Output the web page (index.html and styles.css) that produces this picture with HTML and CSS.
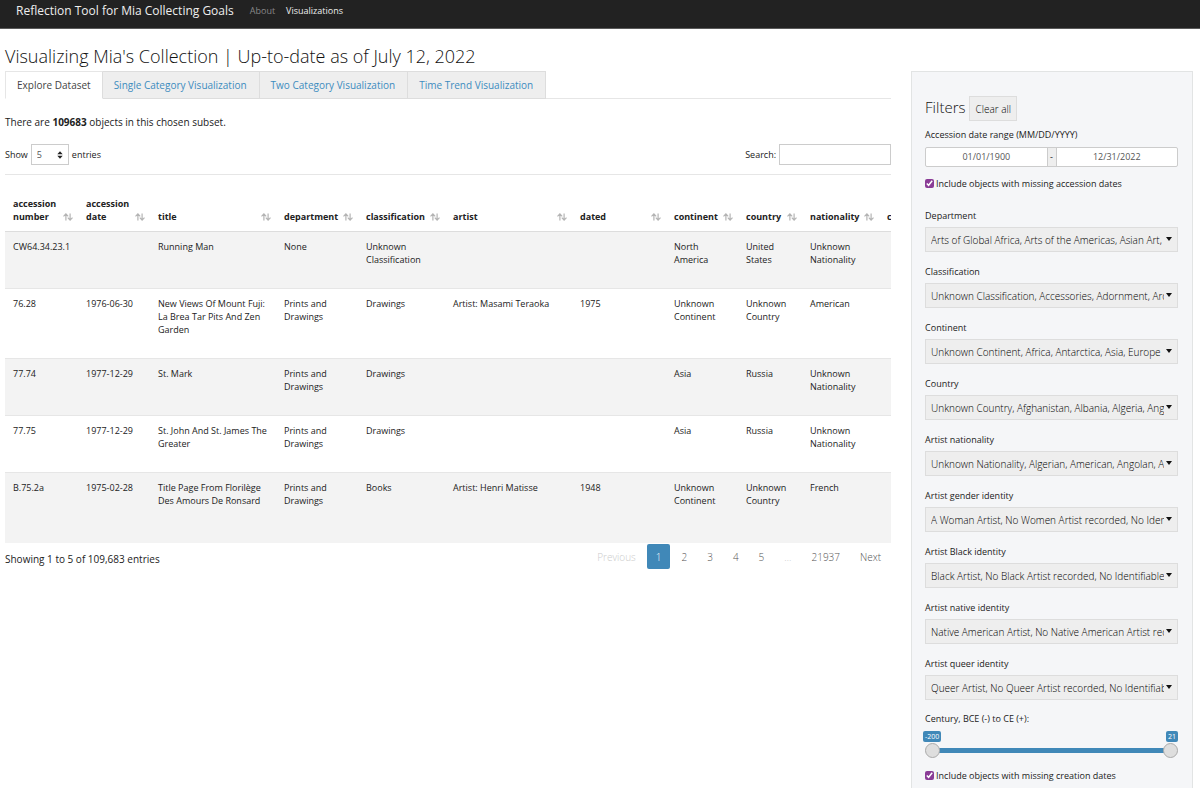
FILE: index.html
```html
<!DOCTYPE html>
<html lang="en">
<head>
<meta charset="utf-8">
<title>Reflection Tool for Mia Collecting Goals</title>
<link rel="stylesheet" href="styles.css">
</head>
<body>
<svg class="sprite" aria-hidden="true">
  <symbol id="sort" viewBox="0 0 10 8">
    <path d="M2.9 7.6V1M.5 3.3L2.9.9l2.3 2.4M7.1.4V7M4.8 4.7l2.3 2.4 2.4-2.4" fill="none" stroke="currentColor" stroke-width="1.2"/>
  </symbol>
</svg>
<nav class="navbar">
  <span class="brand">Reflection Tool for Mia Collecting Goals</span>
  <a class="nav-link" href="#about">About</a>
  <a class="nav-link active" href="#visualizations">Visualizations</a>
</nav>
<h1 class="page-title">Visualizing Mia's Collection | Up-to-date as of July 12, 2022</h1>
<div class="layout">
  <main>
    <div class="tabs">
      <a class="tab active" href="#explore">Explore Dataset</a>
      <a class="tab" href="#single">Single Category Visualization</a>
      <a class="tab" href="#two">Two Category Visualization</a>
      <a class="tab" href="#trend">Time Trend Visualization</a>
    </div>
    <p class="summary">There are <strong>109683</strong> objects in this chosen subset.</p>
    <div class="controls">
      <label class="length">Show
        <span class="length-box">
          <select class="length-select"><option>5</option><option>10</option><option>25</option></select>
          <svg class="updown" viewBox="0 0 6 8" aria-hidden="true"><path d="M.3 3.2L3 .3l2.7 2.9zM.3 4.8L3 7.7l2.7-2.9z"/></svg>
        </span>
        entries</label>
      <label class="search">Search: <input class="search-input" type="search"></label>
    </div>
    <div class="table-wrap">
      <table class="data">
        <colgroup><col class="c-number"><col class="c-date"><col class="c-title"><col class="c-dept"><col class="c-class"><col class="c-artist"><col class="c-dated"><col class="c-cont"><col class="c-country"><col class="c-nat"><col class="c-more"></colgroup>
        <thead>
          <tr>
            <th><button class="sort">accession number<svg class="sort-icon"><use href="#sort"/></svg></button></th>
            <th><button class="sort">accession date<svg class="sort-icon"><use href="#sort"/></svg></button></th>
            <th><button class="sort">title<svg class="sort-icon"><use href="#sort"/></svg></button></th>
            <th><button class="sort">department<svg class="sort-icon"><use href="#sort"/></svg></button></th>
            <th><button class="sort">classification<svg class="sort-icon"><use href="#sort"/></svg></button></th>
            <th><button class="sort">artist<svg class="sort-icon"><use href="#sort"/></svg></button></th>
            <th><button class="sort">dated<svg class="sort-icon"><use href="#sort"/></svg></button></th>
            <th><button class="sort">continent<svg class="sort-icon"><use href="#sort"/></svg></button></th>
            <th><button class="sort">country<svg class="sort-icon"><use href="#sort"/></svg></button></th>
            <th><button class="sort">nationality<svg class="sort-icon"><use href="#sort"/></svg></button></th>
            <th><button class="sort">c</button></th>
          </tr>
        </thead>
        <tbody>
          <tr><td>CW64.34.23.1</td><td></td><td>Running Man</td><td>None</td><td>Unknown Classification</td><td></td><td></td><td>North America</td><td>United States</td><td>Unknown Nationality</td><td></td></tr>
          <tr><td>76.28</td><td>1976-06-30</td><td>New Views Of Mount Fuji: La Brea Tar Pits And Zen Garden</td><td>Prints and Drawings</td><td>Drawings</td><td>Artist: Masami Teraoka</td><td>1975</td><td>Unknown Continent</td><td>Unknown Country</td><td>American</td><td></td></tr>
          <tr><td>77.74</td><td>1977-12-29</td><td>St. Mark</td><td>Prints and Drawings</td><td>Drawings</td><td></td><td></td><td>Asia</td><td>Russia</td><td>Unknown Nationality</td><td></td></tr>
          <tr><td>77.75</td><td>1977-12-29</td><td>St. John And St. James The Greater</td><td>Prints and Drawings</td><td>Drawings</td><td></td><td></td><td>Asia</td><td>Russia</td><td>Unknown Nationality</td><td></td></tr>
          <tr class="tall"><td>B.75.2a</td><td>1975-02-28</td><td>Title Page From Florilège Des Amours De Ronsard</td><td>Prints and Drawings</td><td>Books</td><td>Artist: Henri Matisse</td><td>1948</td><td>Unknown Continent</td><td>Unknown Country</td><td>French</td><td></td></tr>
        </tbody>
      </table>
    </div>
    <div class="table-foot">
      <span class="info">Showing 1 to 5 of 109,683 entries</span>
      <div class="pager">
        <button class="page faint" disabled>Previous</button>
        <button class="page current">1</button>
        <button class="page">2</button>
        <button class="page">3</button>
        <button class="page">4</button>
        <button class="page">5</button>
        <button class="page faint" disabled>…</button>
        <button class="page">21937</button>
        <button class="page">Next</button>
      </div>
    </div>
  </main>
  <aside class="filters">
    <div class="filters-head">
      <h2 class="filters-title">Filters</h2>
      <button class="clear">Clear all</button>
    </div>
    <label class="label" for="from">Accession date range (MM/DD/YYYY)</label>
    <div class="range">
      <input class="date" id="from" type="text" value="01/01/1900">
      <span class="dash">-</span>
      <input class="date" type="text" value="12/31/2022" aria-label="End date">
    </div>
    <label class="check"><input class="tick" type="checkbox" checked>Include objects with missing accession dates</label>
    <div class="fields">
      <div class="field"><label class="label" for="f1">Department</label><div class="picker"><select class="pick" id="f1"><option>Arts of Global Africa, Arts of the Americas, Asian Art, European Art</option></select></div></div>
      <div class="field"><label class="label" for="f2">Classification</label><div class="picker"><select class="pick" id="f2"><option>Unknown Classification, Accessories, Adornment, Architecture</option></select></div></div>
      <div class="field"><label class="label" for="f3">Continent</label><div class="picker"><select class="pick" id="f3"><option>Unknown Continent, Africa, Antarctica, Asia, Europe</option></select></div></div>
      <div class="field"><label class="label" for="f4">Country</label><div class="picker"><select class="pick" id="f4"><option>Unknown Country, Afghanistan, Albania, Algeria, Angola</option></select></div></div>
      <div class="field"><label class="label" for="f5">Artist nationality</label><div class="picker"><select class="pick" id="f5"><option>Unknown Nationality, Algerian, American, Angolan, Argentinian</option></select></div></div>
      <div class="field"><label class="label" for="f6">Artist gender identity</label><div class="picker"><select class="pick" id="f6"><option>A Woman Artist, No Women Artist recorded, No Identifiable Artist</option></select></div></div>
      <div class="field"><label class="label" for="f7">Artist Black identity</label><div class="picker"><select class="pick" id="f7"><option>Black Artist, No Black Artist recorded, No Identifiable Artist</option></select></div></div>
      <div class="field"><label class="label" for="f8">Artist native identity</label><div class="picker"><select class="pick" id="f8"><option>Native American Artist, No Native American Artist recorded</option></select></div></div>
      <div class="field"><label class="label" for="f9">Artist queer identity</label><div class="picker"><select class="pick" id="f9"><option>Queer Artist, No Queer Artist recorded, No Identifiable Artist</option></select></div></div>
    </div>
    <label class="label" for="century-from">Century, BCE (-) to CE (+):</label>
    <div class="badges"><span class="badge">-200</span><span class="badge">21</span></div>
    <div class="slider">
      <input class="slide" id="century-from" type="range" min="-200" max="21" value="-200">
      <input class="slide" type="range" min="-200" max="21" value="21" aria-label="Latest century">
    </div>
    <label class="check"><input class="tick" type="checkbox" checked>Include objects with missing creation dates</label>
  </aside>
</div>
</body>
</html>
```

FILE: styles.css
```css
* { box-sizing: border-box; }
body {
  margin: 0;
  min-height: 100vh;
  display: flex;
  flex-direction: column;
  font: 10px/14px "Open Sans", "Noto Sans", sans-serif;
  color: #222;
  background: #fff;
}
button, input, select { font: inherit; color: inherit; margin: 0; border-radius: 0; }
.sprite { display: none; }

.navbar {
  display: flex;
  align-items: center;
  height: 29px;
  padding: 0 16px 7px;
  background: #222;
  border-bottom: 1px solid #5a5a5a;
}
.brand { margin-right: 16px; font-size: 12px; color: #eee; }
.nav-link { margin-right: 11px; font-size: 9px; color: #888; text-decoration: none; }
.nav-link.active { color: #eee; }

.page-title { margin: 15px 5px 3px; font-size: 18px; line-height: 24px; font-weight: 300; color: #111; }
.layout {
  flex: 1;
  display: grid;
  grid-template-columns: minmax(0, 22fr) minmax(0, 7fr);
  gap: 20px;
  padding: 0 7px 0 5px;
}

.tabs { display: flex; border-bottom: 1px solid #e6e6e6; }
.tab {
  height: 28px;
  margin-bottom: -1px;
  padding: 6px 12px 6px 11px;
  border: 1px solid #ddd;
  border-left-width: 0;
  background: #eee;
  color: #3d8cbe;
  text-decoration: none;
}
.tab.active { padding-right: 11px; border-left-width: 1px; border-color: #e6e6e6 #ddd #fff #e6e6e6; background: #fff; color: #444; }

.summary { margin: 16px 0 15px; }
.controls { display: flex; justify-content: space-between; padding-bottom: 9px; font-size: 9px; }
.length, .search { display: flex; align-items: center; gap: 3px; }
.length-box { position: relative; display: flex; }
.length-select { appearance: none; width: 38px; height: 21px; padding: 0 5px; border: 1px solid #ccc; background: #fff; color: #555; }
.updown { position: absolute; right: 6px; top: 7px; width: 6px; height: 8px; fill: #222; pointer-events: none; }
.search-input { width: 112px; height: 21px; border: 1px solid #ccc; background: #fff; }

.table-wrap { overflow: hidden; border-top: 1px solid #e6e6e6; }
.data { width: 920px; table-layout: fixed; border-collapse: separate; border-spacing: 0; font-size: 9px; line-height: 13px; }
.c-number { width: 73px; }
.c-date { width: 72px; }
.c-title { width: 126px; }
.c-dept { width: 82px; }
.c-class { width: 87px; }
.c-artist { width: 127px; }
.c-dated { width: 94px; }
.c-cont { width: 72px; }
.c-country { width: 64px; }
.c-nat { width: 77px; }
.data th { height: 57px; padding: 0 5px 8px 8px; border-bottom: 1px solid #ddd; vertical-align: bottom; text-align: left; }
.sort { display: flex; justify-content: space-between; align-items: flex-end; width: 100%; padding: 0; border: 0; background: none; font-weight: 700; text-align: left; }
.sort-icon { flex: none; width: 10px; height: 8px; margin-bottom: 2px; color: #b4b4b4; }
.data td { padding: 8px 8px 22px; border-bottom: 1px solid #e6e6e6; vertical-align: top; }
.data tbody tr:nth-child(odd) { background: #f3f3f3; }
.data .tall { height: 70px; }
.data .tall td { border-bottom: 0; }

.table-foot { display: flex; justify-content: space-between; align-items: flex-start; padding-top: 1px; }
.info { padding-top: 8px; }
.pager { display: flex; gap: 2px; padding-right: 1px; }
.page { height: 25px; padding: 0 9px; border: 0; border-radius: 2px; background: none; font-weight: 300; color: #555; }
.page.faint { color: #ccc; }
.page.current { background: #4088b8; color: #fff; }

.filters { padding: 24px 14px 6px 13px; border: 1px solid #e2e4e4; border-bottom: 0; background: #f5f6f8; }
.filters-head { display: flex; align-items: flex-start; gap: 4px; margin-bottom: 7px; }
.filters-title { margin: 0; font-size: 15px; line-height: 22px; font-weight: 300; color: #111; }
.clear { height: 25px; padding: 0 5px; border: 1px solid #ddd; background: #eee; font-weight: 300; color: #000; }
.label { display: block; font-size: 9px; line-height: 13px; }
.range { display: flex; height: 20px; margin: 6px 0 10px; border: 1px solid #ccc; border-radius: 2px; background: #fff; font-size: 9px; }
.date { flex: 1; min-width: 0; padding: 0; border: 0; background: none; text-align: center; color: #555; }
.dash { width: 10px; border: solid #ccc; border-width: 0 1px; background: #eee; text-align: center; line-height: 18px; }
.check { display: flex; align-items: center; gap: 2px; font-size: 9px; line-height: 13px; }
.tick { width: 9px; height: 9px; accent-color: #8a3c96; }
.fields { display: grid; gap: 13px; margin: 19px 0 12px; }
.field { display: grid; gap: 5px; }
.picker { position: relative; }
.picker::after { content: ""; position: absolute; right: 6px; top: 10px; border: solid transparent; border-width: 4px 3px 0; border-top-color: #111; pointer-events: none; }
.pick { appearance: none; display: block; width: 100%; height: 25px; padding: 0 13px 0 5px; border: 1px solid #ddd; background: #eee; font-weight: 300; color: #000; }

.badges { display: flex; justify-content: space-between; margin: 6px 0 0 -2px; }
.badge { padding: 0 2px; border-radius: 2px; background: #4088b8; color: #fff; font-size: 7px; line-height: 11px; }
.slider { display: grid; height: 16px; margin-bottom: 11px; align-items: center; background: linear-gradient(#4088b8, #4088b8) center / calc(100% - 14px) 5px no-repeat; }
.slide { grid-area: 1 / 1; appearance: none; width: 100%; height: 16px; background: none; pointer-events: none; }
.slide::-webkit-slider-thumb { appearance: none; width: 15px; height: 15px; border: 1px solid #aaa; border-radius: 50%; background: #dedede; pointer-events: auto; }
```
